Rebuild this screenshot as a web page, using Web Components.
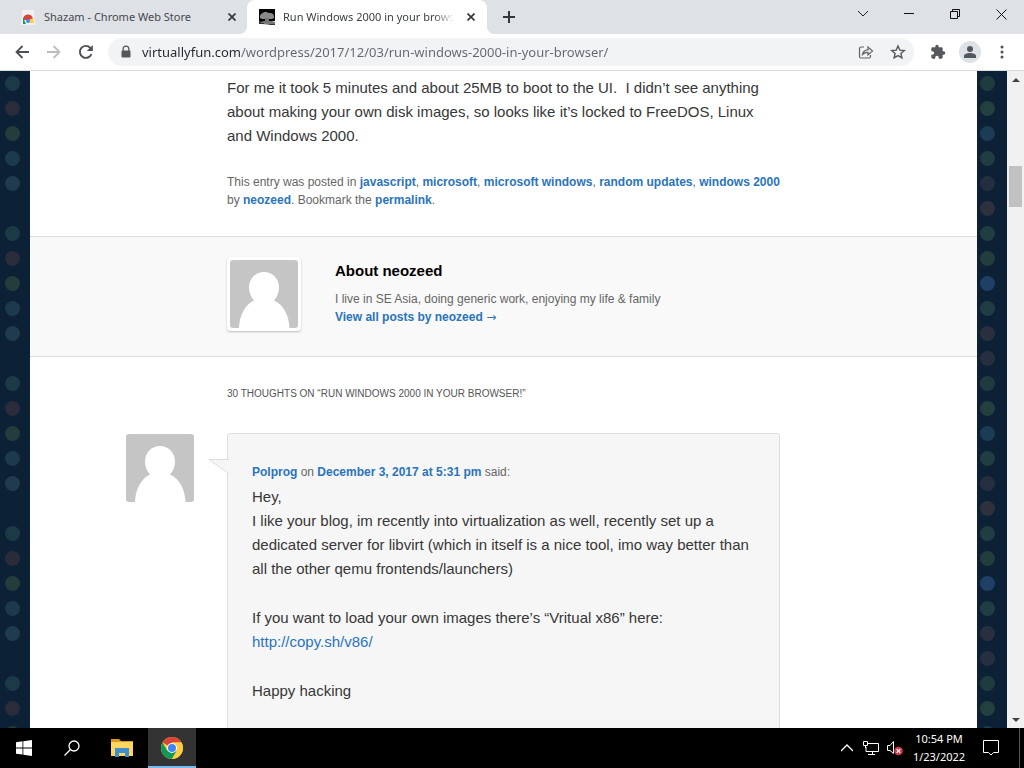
<!DOCTYPE html>
<html lang="en">
<head>
<meta charset="utf-8">
<title>Run Windows 2000 in your browser!</title>
<style>
html, body { margin: 0; height: 100%; }
body { font-family: "Liberation Sans", Arial, sans-serif; background: #000; overflow: hidden; }
</style>
</head>
<body>
<desktop-screen></desktop-screen>
<script>
const define = (name, html, after) => customElements.define(name, class extends HTMLElement {
  constructor() {
    super();
    const t = document.createElement('template');
    t.innerHTML = html;
    this.attachShadow({ mode: 'open' }).append(t.content.cloneNode(true));
  }
  connectedCallback() { if (after) after(this, this.shadowRoot); }
});

define('person-avatar', `
<style>
:host { display: block; width: 68px; height: 68px; border-radius: 3px; overflow: hidden; background: #c5c5c5; }
svg { display: block; }
</style>
<svg width="68" height="68" viewBox="0 0 68 68" role="img" aria-label="avatar"><path fill="#fff" d="M34 12c8.500 0 15 6.500 15 15.500 0 5.500-2 9.500-5 13 9 4 15 14 15.500 27.500H9C9.500 54.500 15.500 44.500 24 40.500c-3-3.500-5-7.500-5-13C19 18.500 25.500 12 34 12z"/></svg>`);

define('browser-tab', `
<style>
:host { display: flex; align-items: center; box-sizing: border-box; width: 240px; height: 34px; padding: 0 7px 0 12px; color: #45494d; font: 11px/18px "Noto Sans", "Open Sans", sans-serif; }
:host([active]) { position: relative; background: #fff; border-radius: 8px 8px 0 0; color: #3c4043; }
:host([active])::before, :host([active])::after { content: ""; position: absolute; bottom: 0; width: 8px; height: 8px; }
:host([active])::before { left: -8px; background: radial-gradient(circle at 0 0, transparent 8px, #fff 8px); }
:host([active])::after { right: -8px; background: radial-gradient(circle at 100% 0, transparent 8px, #fff 8px); }
::slotted(svg) { flex: none; margin-right: 8px; }
.title { flex: 1; min-width: 0; margin-right: 8px; overflow: hidden; white-space: nowrap; }
:host([active]) .title { -webkit-mask-image: linear-gradient(90deg, #000 88%, transparent); }
button { flex: none; width: 18px; height: 18px; padding: 0; border: 0; background: none; display: grid; place-items: center; }
</style>
<slot name="icon"></slot><span class="title"><slot></slot></span>
<button aria-label="Close tab"><svg width="8" height="8" viewBox="0 0 8 8"><path d="M.5.5l7 7M7.500.5l-7 7" stroke="#33373a" stroke-width="1.700"/></svg></button>`);

define('tab-strip', `
<style>
:host { display: flex; height: 34px; background: #dee1e6; }
browser-tab:first-of-type { width: 247px; padding-left: 20px; padding-right: 6px; }
.new, .win { border: 0; background: none; padding: 0; height: 28px; display: grid; place-items: center; }
.new { width: 28px; margin: 3px 0 0 8px; }
.gap { flex: 1; }
.win { width: 46px; }
</style>
<browser-tab>
<svg slot="icon" width="16" height="16" viewBox="0 0 16 16"><path fill="#f1f1f1" d="M2 1h12l1 15H1z"/><path fill="#db4437" d="M3 11a5 5 0 0 1 10-1l-5 1z"/><path fill="#0f9d58" d="M3 8l2 5 1 2H3z"/><path fill="#ffcd40" d="M13 9l1 5H9l2-4z"/><circle cx="8" cy="12" r="2" fill="#4285f4"/></svg>Shazam - Chrome Web Store</browser-tab>
<browser-tab active>
<svg slot="icon" width="16" height="16" viewBox="0 0 16 16"><path d="M0 0h16v12H0z" fill="#050505"/><path fill="#8a8a8a" d="M1 7l1-2 2-1 1-1h3l1 1h3l2 1 1 2v2l-2 1H3L1 9z"/><path fill="#777" d="M6 9h4v3h3l3 1v2l-5 1-8-1-3-2 3-1h3z"/><path d="M0 12h4v1H2v1h3v1H0zM11 15h5v1h-6z" fill="#333"/></svg>Run Windows 2000 in your browser!</browser-tab>
<button class="new" aria-label="New tab"><svg width="12" height="12" viewBox="0 0 12 12"><path d="M6 0v12M0 6h12" stroke="#33373a" stroke-width="2"/></svg></button>
<span class="gap"></span>
<button class="win" aria-label="Search tabs"><svg width="12" height="8" viewBox="0 0 12 8"><path d="M1 1l5 5 5-5" fill="none" stroke="#222"/></svg></button>
<button class="win" aria-label="Minimize"><svg width="10" height="2" viewBox="0 0 10 2"><path d="M0 0h10v1H0z" fill="#111"/></svg></button>
<button class="win" aria-label="Restore"><svg width="10" height="10" viewBox="0 0 10 10"><path d="M.5 2.500h7v7h-7zM2.500 2V.5h7v7H8" fill="none" stroke="#111"/></svg></button>
<button class="win" aria-label="Close"><svg width="11" height="11" viewBox="0 0 11 11"><path d="M.5.5l10 10M10.500.5l-10 10" stroke="#111"/></svg></button>`);

define('browser-toolbar', `
<style>
:host { display: flex; align-items: center; height: 36px; padding: 0 6px; background: #fff; border-bottom: 1px solid #d9dbde; }
button { flex: none; width: 32px; height: 28px; padding: 0; border: 0; background: none; display: grid; place-items: center; }
.box { flex: 1; display: flex; align-items: center; height: 28px; margin: 0 8px 0 6px; border-radius: 14px; background: #f1f3f4; padding: 0 0 0 12px; }
input { flex: 1; min-width: 0; height: 24px; margin: 0 0 0 10px; padding: 0; border: 0; outline: 0; font: 13px/20px "Noto Sans", "Open Sans", sans-serif; color: #5f6368; background: linear-gradient(90deg, #24272a 98px, #63676b 98px); -webkit-background-clip: text; background-clip: text; -webkit-text-fill-color: transparent; }
.who span { width: 22px; height: 22px; border-radius: 50%; background: #dee1e6; display: grid; place-items: center; }
</style>
<button aria-label="Back"><svg width="14" height="14" viewBox="0 0 14 14"><path d="M14 7H1.500M7.500 1l-6 6 6 6" fill="none" stroke="#4c5054" stroke-width="1.800"/></svg></button>
<button aria-label="Forward"><svg width="14" height="14" viewBox="0 0 14 14"><path d="M0 7h12.500M6.500 1l6 6-6 6" fill="none" stroke="#bbbdbf" stroke-width="1.800"/></svg></button>
<button aria-label="Reload"><svg width="16" height="16" viewBox="0 0 16 16"><path d="M13.500 10A6 6 0 1 1 12.300 3.800L14 5.500" fill="none" stroke="#4c5054" stroke-width="1.900"/><path d="M14.800 1v6H8.800z" fill="#4c5054"/></svg></button>
<div class="box">
<svg width="12" height="14" viewBox="0 0 12 14"><path fill="#55595d" fill-rule="evenodd" d="M2.500 5.500V4a3.500 3.500 0 0 1 7 0v1.500q1 0 1 1v5q0 1-1 1h-7q-1 0-1-1v-5q0-1 1-1zm1.300 0h4.400V4a2.200 2.200 0 0 0-4.400 0z"/></svg>
<input type="text" aria-label="Address and search bar" value="virtuallyfun.com/wordpress/2017/12/03/run-windows-2000-in-your-browser/">
<button aria-label="Share"><svg width="16" height="14" viewBox="0 0 16 14"><path d="M6 2H3Q1.500 2 1.500 3.500v8Q1.500 13 3 13h8q1.500 0 1.500-1.500V10M4.500 9.500C5 6.500 7 5 10 4.800V2l4.500 4L10 10V7.300C7.500 7.300 6 8 4.500 9.500z" fill="none" stroke="#5f6368" stroke-width="1.200"/></svg></button>
<button aria-label="Bookmark"><svg width="16" height="16" viewBox="0 0 16 16"><path d="M8 2l1.800 4.100 4.500.4-3.400 3 1 4.400L8 11.600l-3.900 2.300 1-4.400-3.400-3 4.500-.4z" fill="none" stroke="#55595d" stroke-width="1.400"/></svg></button>
</div>
<button aria-label="Extensions"><svg width="16" height="16" viewBox="0 0 24 24"><path fill="#55595d" d="M20.500 11H19V7c0-1.100-.9-2-2-2h-4V3.500a2.500 2.500 0 0 0-5 0V5H4c-1.100 0-2 .9-2 2v3.800h1.500a2.700 2.700 0 0 1 0 5.400H2V20c0 1.100.9 2 2 2h3.800v-1.500a2.700 2.700 0 0 1 5.400 0V22H17c1.100 0 2-.9 2-2v-4h1.500a2.500 2.500 0 0 0 0-5z"/></svg></button>
<button class="who" aria-label="Profile"><span><svg width="14" height="14" viewBox="0 0 14 14"><circle cx="7" cy="4" r="3" fill="#4f575f"/><path fill="#4f575f" d="M1 13v-2c0-4 12-4 12 0v2z"/></svg></span></button>
<button aria-label="Menu"><svg width="4" height="14" viewBox="0 0 4 14"><g fill="#4c5054"><circle cx="2" cy="2" r="1.500"/><circle cx="2" cy="7" r="1.500"/><circle cx="2" cy="12" r="1.500"/></g></svg></button>`);

define('entry-meta', `
<style>
:host { display: block; font-size: 12px; line-height: 18px; color: #666; }
::slotted(a) { color: #2a74bb; font-weight: bold; text-decoration: none; }
</style><slot></slot>`);

define('author-card', `
<style>
:host { display: flex; padding: 20px 20.8% 25px; border: solid #ddd; border-width: 1px 0; background: #f9f9f9; }
.frame { flex: none; height: 68px; padding: 3px; background: #fff; border-radius: 3px; box-shadow: 0 1px 2px #bbb; }
.text { margin-left: 34px; }
h2 { margin: 0 0 5px; font-size: 15px; line-height: 28px; color: #000; }
</style>
<div class="frame"><person-avatar></person-avatar></div>
<div class="text"><h2><slot name="name"></slot></h2><slot></slot></div>`);

define('blog-comment', `
<style>
:host { display: block; position: relative; padding: 29px 24px; border: 1px solid #ddd; border-radius: 3px; background: #f6f6f6; }
person-avatar { position: absolute; left: -102px; top: 0; }
.tip { position: absolute; left: -20px; top: 25px; }
</style>
<person-avatar></person-avatar>
<svg class="tip" width="21" height="16" viewBox="0 0 21 16"><path d="M21 .5H1l19.500 14" fill="#f6f6f6" stroke="#ddd"/></svg>
<slot></slot>`);

define('blog-page', `
<style>
:host { display: block; flex: 1; min-width: 0; overflow: hidden; background-color: #0c2135; position: relative; }
.dots { position: absolute; top: 0; bottom: 0; width: 24px; overflow: hidden; }
.dots.left { left: 0; } .dots.right { right: 8px; }
.dots i { display: block; width: 15px; height: 15px; margin: 5px 5px 10px; border-radius: 50%; }
main { min-height: 100%; margin: 0 30px; padding-top: 5px; box-sizing: border-box; background: #fff; color: #373737; font-size: 15px; line-height: 24px; position: relative; }
.column { margin: 0 20.8%; }
p { margin: 0; }
.foot { margin: 25px 0 27px; }
h2 { margin: 28px 0 30px; font-size: 10px; font-weight: normal; line-height: 18px; color: #555; text-transform: uppercase; }
a { color: #2a74bb; text-decoration: none; }
blog-comment entry-meta { margin-bottom: 4px; }
blog-comment p { margin-bottom: 25px; }
.arrow { font-family: "DejaVu Sans", sans-serif; font-weight: normal; }
</style>
<div class="dots left"></div><div class="dots right"></div>
<main>
<div class="column">
<p>For me it took 5 minutes and about 25MB to boot to the UI.&nbsp; I didn’t see anything about making your own disk images, so looks like it’s locked to FreeDOS, Linux and Windows 2000.</p>
<entry-meta class="foot">This entry was posted in <a href="#javascript">javascript</a>, <a href="#microsoft">microsoft</a>, <a href="#microsoft-windows">microsoft windows</a>, <a href="#random-updates">random updates</a>, <a href="#windows-2000">windows 2000</a> by <a href="#neozeed">neozeed</a>. Bookmark the <a href="#permalink">permalink</a>.</entry-meta>
</div>
<author-card><span slot="name">About neozeed</span>
<entry-meta>I live in SE Asia, doing generic work, enjoying my life &amp; family<br><a href="#author">View all posts by neozeed <span class="arrow">→</span></a></entry-meta></author-card>
<div class="column">
<h2>30 thoughts on “Run Windows 2000 in your browser!”</h2>
<blog-comment>
<entry-meta><a href="#polprog">Polprog</a> on <a href="#comment">December 3, 2017 at 5:31 pm</a> said:</entry-meta>
<p>Hey,<br>I like your blog, im recently into virtualization as well, recently set up a dedicated server for libvirt (which in itself is a nice tool, imo way better than all the other qemu frontends/launchers)</p>
<p>If you want to load your own images there’s “Vritual x86” here:<br><a href="http://copy.sh/v86/">http://copy.sh/v86/</a></p>
<p>Happy hacking</p>
</blog-comment>
</div>
</main>`, (host, root) => {
  const fill = (sel, colors) => {
    const col = root.querySelector(sel);
    for (let n = 0; n < 60; n++) {
      const dot = document.createElement('i');
      dot.style.background = colors[n % colors.length];
      col.append(dot);
    }
  };
  fill('.left', ['#1c3946', '#2a2b3b', '#233d3c', '#1c3a4b', '#203b4b', 'none']);
  fill('.right', ['#203b40', '#233f3e', '#1c3b54', '#213d42', '#242e40', '#2e303d', '#203d42', '#233d3d', '#1f3f66', '#213d44', '#2a2f3f', '#262f40']);
});

define('scroll-bar', `
<style>
:host { display: flex; flex-direction: column; width: 17px; background: #f1f1f1; }
button { height: 17px; padding: 0; border: 0; background: none; display: grid; place-items: center; }
.track { flex: 1; padding: 0 2px; }
.thumb { height: 41px; margin-top: 78px; background: #c1c1c1; }
</style>
<button aria-label="Scroll up"><svg width="8" height="4" viewBox="0 0 8 4"><path d="M4 0l4 4H0z" fill="#444"/></svg></button>
<div class="track"><div class="thumb"></div></div>
<button aria-label="Scroll down"><svg width="8" height="4" viewBox="0 0 8 4"><path d="M4 4l4-4H0z" fill="#444"/></svg></button>`);

define('task-bar', `
<style>
:host { display: flex; flex: none; height: 40px; background: #000; color: #fff; }
button { box-sizing: border-box; width: 48px; padding: 0; border: 0; background: none; color: inherit; display: grid; place-items: center; }
.files { width: 52px; }
.on { background: #333; border-bottom: 2px solid #76b9ed; padding-top: 2px; }
.gap { flex: 1; }
.tray { width: 24px; }
.clock { width: 64px; font: 11px/18px "Noto Sans", "Open Sans", sans-serif; align-content: center; white-space: nowrap; }
.note { width: 40px; }
.show { width: 5px; margin-left: 8px; border-left: 1px solid #555; }
</style>
<button aria-label="Start"><svg width="16" height="16" viewBox="0 0 16 16"><path fill="#fff" d="M0 2.200L6.500 1.300v6.200H0zM7.300 1.200L16 0v7.500H7.300zM0 8.400h6.500v6.200L0 13.700zM7.300 8.400H16V16l-8.700-1.200z"/></svg></button>
<button aria-label="Search"><svg width="16" height="16" viewBox="0 0 16 16"><circle cx="10" cy="6" r="5" fill="none" stroke="#fff" stroke-width="1.300"/><path d="M6.500 9.500L.5 15.500" stroke="#fff" stroke-width="1.300"/></svg></button>
<button class="files" aria-label="File Explorer"><svg width="22" height="20" viewBox="0 0 22 20"><path fill="#d89b20" d="M0 1h8l2 2h12v4H0z"/><path fill="#ffd75e" d="M0 4h22v14H0z"/><path fill="#3d8fd1" d="M4 10h14v9h-4v-4H8v4H4z"/></svg></button>
<button class="on" aria-label="Google Chrome"><svg width="22" height="22" viewBox="0 0 22 22"><circle cx="11" cy="11" r="11" fill="#ffcd40"/><path fill="#db4437" d="M11 11L1.500 5.500A11 11 0 0 1 20.500 5.500H11z"/><path fill="#109855" d="M1.500 5.500A11 11 0 0 0 11 22l4.800-8.300L11 11 6.200 13.700z"/><path fill="#ffcd40" d="M20.500 5.500H11l4.800 8.200L11 22A11 11 0 0 0 20.500 5.500z"/><circle cx="11" cy="11" r="5" fill="#fff"/><circle cx="11" cy="11" r="4" fill="#4285f4"/></svg></button>
<span class="gap"></span>
<button class="tray" aria-label="Hidden icons"><svg width="12" height="8" viewBox="0 0 12 8"><path d="M0 7l6-6 6 6" fill="none" stroke="#fff" stroke-width="1.300"/></svg></button>
<button class="tray" aria-label="Network"><svg width="16" height="14" viewBox="0 0 16 14"><path d="M5 2.500h10.500v8H3V6M.5.500h4v4h-4zM2.500 5v2M9.500 11v2M5 13.500h7" fill="none" stroke="#fff"/></svg></button>
<button class="tray" aria-label="Volume muted"><svg width="16" height="16" viewBox="0 0 16 16"><path d="M.5 5.500H3l3.500-4v12L3 10.500H.5z" fill="none" stroke="#fff"/><circle cx="11.500" cy="11" r="4.300" fill="#d23a48"/><path d="M9.700 9.200l3.600 3.600M13.300 9.200l-3.600 3.600" stroke="#fff" stroke-width="1.200"/></svg></button>
<button class="clock"><span>10:54 PM</span><span>1/23/2022</span></button>
<button class="note" aria-label="Notifications"><svg width="16" height="16" viewBox="0 0 16 16"><path d="M.5.5h15v12h-5L8 15l-2.500-2.500h-5z" fill="none" stroke="#fff"/></svg></button>
<button class="show" aria-label="Show desktop"></button>`);

define('desktop-screen', `
<style>
:host { display: flex; flex-direction: column; height: 100vh; }
tab-strip, browser-toolbar { flex: none; }
.view { flex: 1; min-height: 0; display: flex; }
</style>
<tab-strip></tab-strip>
<browser-toolbar></browser-toolbar>
<div class="view"><blog-page></blog-page><scroll-bar></scroll-bar></div>
<task-bar></task-bar>`);
</script>
</body>
</html>
